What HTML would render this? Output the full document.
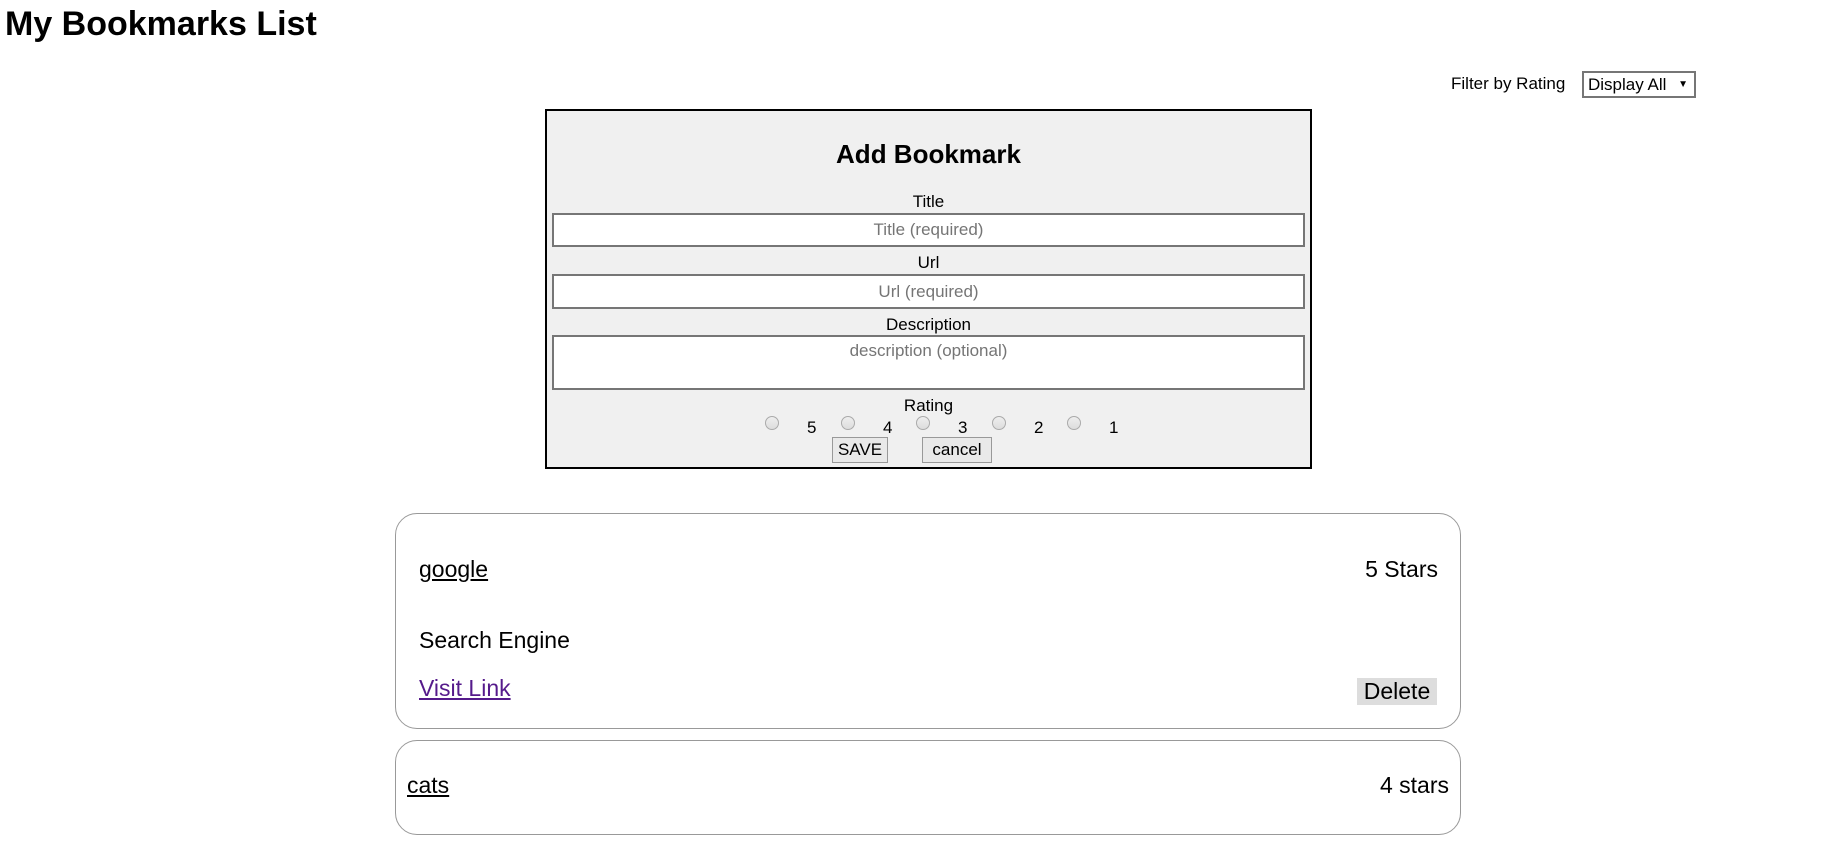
<!DOCTYPE html>
<html><head><meta charset="utf-8"><style>
*{box-sizing:border-box;margin:0;padding:0}
body{width:1834px;height:868px;background:#fff;font-family:"Liberation Sans",sans-serif;color:#000;position:relative;overflow:hidden}
.a{position:absolute;white-space:nowrap}
h1{position:absolute;left:5px;top:5px;font-size:34px;font-weight:bold}
.form{position:absolute;left:545px;top:109px;width:767px;height:360px;background:#f0f0f0;border:2px solid #000}
.lbl{position:absolute;left:0;width:100%;text-align:center;font-size:17px}
.inp{position:absolute;left:5px;width:753px;background:#fff;border:2px solid #767676;text-align:center;color:#757575;font-size:17px}
.radio{position:absolute;top:305px;width:14px;height:14px;border-radius:50%;border:1px solid #aaa;background:linear-gradient(#eee,#ddd)}
.num{position:absolute;top:307px;font-size:17px}
.btn{position:absolute;top:326px;height:26px;border:1px solid #999;background:#e9e9e9;font-size:17px;text-align:center;line-height:24px}
.card{position:absolute;left:395px;width:1066px;border:1px solid #999;border-radius:22px}
</style></head><body>
<h1>My Bookmarks List</h1>
<div class="a" style="left:1451px;top:74px;font-size:17px">Filter by Rating</div>
<div class="a" style="left:1582px;top:71px;width:114px;height:27px;border:2px solid #767676;font-size:17px;line-height:23px;padding-left:4px">Display All <span style="font-size:10px;position:absolute;right:6px;top:0">▼</span></div>
<div class="form">
 <div class="lbl" style="top:28px;font-size:26px;font-weight:bold">Add Bookmark</div>
 <div class="lbl" style="top:81px">Title</div>
 <div class="inp" style="top:102px;height:34px;line-height:30px">Title (required)</div>
 <div class="lbl" style="top:142px">Url</div>
 <div class="inp" style="top:163px;height:35px;line-height:31px">Url (required)</div>
 <div class="lbl" style="top:204px">Description</div>
 <div class="inp" style="top:224px;height:55px;line-height:28px">description (optional)</div>
 <div class="lbl" style="top:285px">Rating</div>
 <div class="radio" style="left:218px"></div><div class="num" style="left:260px">5</div>
 <div class="radio" style="left:294px"></div><div class="num" style="left:336px">4</div>
 <div class="radio" style="left:369px"></div><div class="num" style="left:411px">3</div>
 <div class="radio" style="left:445px"></div><div class="num" style="left:487px">2</div>
 <div class="radio" style="left:520px"></div><div class="num" style="left:562px">1</div>
 <div class="btn" style="left:285px;width:56px">SAVE</div>
 <div class="btn" style="left:375px;width:70px">cancel</div>
</div>
<div class="card" style="top:513px;height:216px">
 <div class="a" style="left:23px;top:42px;font-size:23px;text-decoration:underline">google</div>
 <div class="a" style="right:22px;top:42px;font-size:23px">5 Stars</div>
 <div class="a" style="left:23px;top:113px;font-size:23px">Search Engine</div>
 <div class="a" style="left:23px;top:161px;font-size:23px;color:#551a8b;text-decoration:underline">Visit Link</div>
 <div class="a" style="right:23px;top:164px;width:80px;height:27px;background:#ddd;font-size:23px;text-align:center;line-height:27px">Delete</div>
</div>
<div class="card" style="top:740px;height:95px">
 <div class="a" style="left:11px;top:31px;font-size:23px;text-decoration:underline">cats</div>
 <div class="a" style="right:11px;top:31px;font-size:23px">4 stars</div>
</div>
</body></html>
